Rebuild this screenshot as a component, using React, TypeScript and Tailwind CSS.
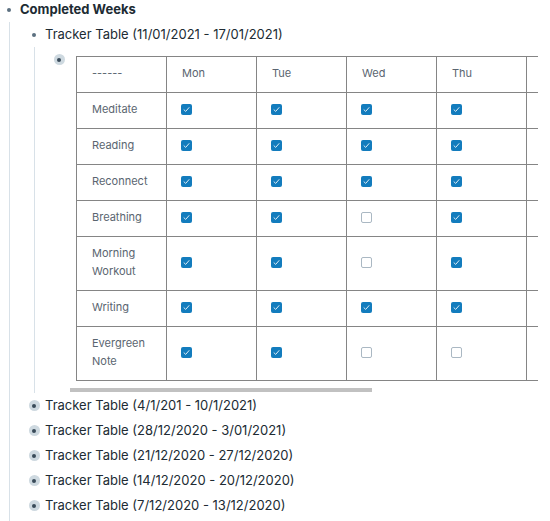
const days = ["Mon", "Tue", "Wed", "Thu", "Fri", "Sat", "Sun"];

const rows: { label: string; checks: boolean[] }[] = [
  { label: "Meditate", checks: [true, true, true, true, true, false, false] },
  { label: "Reading", checks: [true, true, true, true, true, false, false] },
  { label: "Reconnect", checks: [true, true, true, true, false, false, false] },
  { label: "Breathing", checks: [true, true, false, true, true, false, false] },
  { label: "Morning Workout", checks: [true, true, false, true, false, false, false] },
  { label: "Writing", checks: [true, true, true, true, true, false, false] },
  { label: "Evergreen Note", checks: [true, true, false, false, false, false, false] },
];

const olderWeeks = [
  "Tracker Table (4/1/201 - 10/1/2021)",
  "Tracker Table (28/12/2020 - 3/01/2021)",
  "Tracker Table (21/12/2020 - 27/12/2020)",
  "Tracker Table (14/12/2020 - 20/12/2020)",
  "Tracker Table (7/12/2020 - 13/12/2020)",
];

const Bullet = () => (
  <div className="flex h-[25px] w-[18px] shrink-0 items-center justify-center">
    <span className="h-[4px] w-[4px] rounded-full bg-[#5c7080]" />
  </div>
);

const CollapsedBullet = () => (
  <div className="flex h-[25px] w-[18px] shrink-0 items-center justify-center">
    <span className="flex h-[11px] w-[11px] items-center justify-center rounded-full bg-[#ced9e0]">
      <span className="h-[4px] w-[4px] rounded-full bg-[#394b59]" />
    </span>
  </div>
);

const Checkbox = ({ checked }: { checked: boolean }) =>
  checked ? (
    <span className="flex h-[11px] w-[11px] items-center justify-center rounded-[2px] bg-[#137cbd]">
      <svg width="9" height="9" viewBox="0 0 9 9" fill="none">
        <path d="M2 4.8 L3.7 6.4 L7 2.6" stroke="#dbeaf5" strokeWidth="1" strokeLinecap="round" strokeLinejoin="round" />
      </svg>
    </span>
  ) : (
    <span className="block h-[11px] w-[11px] rounded-[2px] border border-[#aab8c3] bg-white" />
  );

const TrackerTable = () => (
  <div className="relative w-[468px] overflow-hidden pb-[12px] pl-[6px]">
    <table className="w-[720px] table-fixed border-collapse text-[11px] leading-[18px] text-[#5a6570]">
      <thead>
        <tr>
          <td className="w-[90px] border border-[#858585] px-[15px] pt-[7px] pb-[10px] align-middle">------</td>
          {days.map((d) => (
            <td key={d} className="w-[90px] border border-[#858585] px-[15px] pt-[7px] pb-[10px] align-middle">
              {d}
            </td>
          ))}
        </tr>
      </thead>
      <tbody>
        {rows.map((r) => (
          <tr key={r.label}>
            <td className="border border-[#858585] px-[15px] pt-[7px] pb-[10px] align-middle">{r.label}</td>
            {r.checks.map((c, i) => (
              <td key={i} className="border border-[#858585] px-[14px] pb-[3px] align-middle">
                <Checkbox checked={c} />
              </td>
            ))}
          </tr>
        ))}
      </tbody>
    </table>
    <div className="absolute bottom-[1px] left-0 h-[4px] w-[302px] bg-[#c1c1c1]" />
  </div>
);

export default function App() {
  return (
    <div className="h-[521px] w-[550px] overflow-hidden bg-white font-['Inter',sans-serif] text-[13px] text-[#202b33]">
      <div className="-mt-[3px]">
        <div className="flex items-center gap-[2px]">
          <Bullet />
          <span className="font-bold">Completed Weeks</span>
        </div>
        <div className="ml-[9px] border-l border-[#d8e1e8] pl-[15px] pb-[40px]">
          <div className="flex items-center gap-[2px]">
            <Bullet />
            <span>Tracker Table (11/01/2021 - 17/01/2021)</span>
          </div>
          <div className="ml-[9px] border-l border-[#d8e1e8] pl-[15px]">
            <div className="flex items-start gap-[2px]">
              <CollapsedBullet />
              <div className="mt-[9px]">
                <TrackerTable />
              </div>
            </div>
          </div>
          {olderWeeks.map((w) => (
            <div key={w} className="flex items-center gap-[2px]">
              <CollapsedBullet />
              <span>{w}</span>
            </div>
          ))}
        </div>
      </div>
    </div>
  );
}
